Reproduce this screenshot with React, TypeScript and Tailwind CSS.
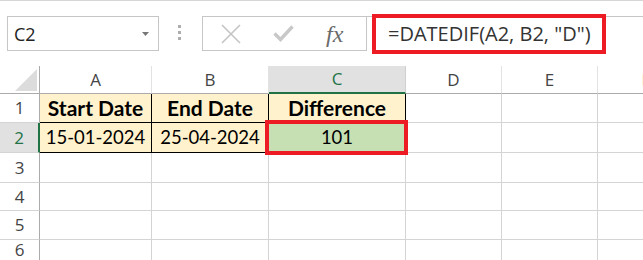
import React from "react";

const cols = ["A", "B", "C", "D", "E", "F"];
const rowHeights = ["h-[29px]", "h-[30px]", "h-[30px]", "h-[28px]", "h-[29px]", "h-[21px]"];
const colWidths = ["w-[112px]", "w-[117px]", "w-[137px]", "w-[96px]", "w-[96px]", "w-[97px]"];

const ui = { fontFamily: '"Open Sans", "Noto Sans", sans-serif' };
const cellFont = { fontFamily: 'Lato, "Liberation Sans", sans-serif' };

function FormulaBar() {
  return (
    <div className="relative flex h-[66px] items-start border-t border-[#d6d6d6] pt-[15px]" style={ui}>
      <div className="ml-[7px] flex h-[35px] w-[152px] shrink-0 items-center justify-between border border-[#c6c6c6] bg-white pl-[6px] pr-[9px]">
        <span className="text-[18px] leading-none text-[#222]">C2</span>
        <svg width="7" height="4" viewBox="0 0 7 4">
          <path d="M0 0h7L3.5 4z" fill="#777" />
        </svg>
      </div>
      <div className="ml-[19px] mt-[9px] flex flex-col gap-[3px]">
        <div className="h-[3px] w-[3px] bg-[#aeaeae]" />
        <div className="h-[3px] w-[3px] bg-[#aeaeae]" />
        <div className="h-[3px] w-[3px] bg-[#aeaeae]" />
      </div>
      <div className="ml-[21px] flex h-[35px] w-[165px] shrink-0 items-center border border-[#c6c6c6] bg-white">
        <svg className="ml-[18px]" width="20" height="20" viewBox="0 0 20 20">
          <path d="M1 1L19 19M19 1L1 19" stroke="#c4c4c4" strokeWidth="1.6" />
        </svg>
        <svg className="ml-[32px]" width="21" height="17" viewBox="0 0 21 17">
          <path d="M1.5 8.5L7.5 14.5L19.5 1.5" stroke="#c8c8c8" strokeWidth="3.4" fill="none" />
        </svg>
        <span
          className="ml-[32px] text-[24px] italic leading-none text-[#6a6a6a]"
          style={{ fontFamily: '"Liberation Serif", "DejaVu Serif", serif' }}
        >
          fx
        </span>
      </div>
      <div className="h-[35px] flex-1 border-t border-[#c6c6c6] bg-white" />
      <div className="absolute left-[372px] top-[13px] flex h-[40px] w-[234px] items-center border-4 border-[#ed1c24] bg-white pl-[12px]">
        <span className="whitespace-nowrap text-[20px] leading-none text-[#333]">=DATEDIF(A2, B2, "D")</span>
      </div>
    </div>
  );
}

function ColumnHeaders() {
  return (
    <div className="flex h-[28px]" style={ui}>
      <div className="flex w-[40px] shrink-0 items-end justify-end border-b border-r border-[#ababab] bg-white pb-[2px] pr-[2px]">
        <svg width="22" height="22" viewBox="0 0 22 22">
          <path d="M22 0V22H0z" fill="#dcdcdc" />
        </svg>
      </div>
      {cols.map((c, i) =>
        c === "C" ? (
          <div
            key={c}
            className={`${colWidths[i]} flex shrink-0 items-center justify-center border-b-2 border-r border-b-[#217346] border-r-[#cfcfcf] bg-[#e1e1e1] text-[17px] text-[#217346]`}
          >
            C
          </div>
        ) : (
          <div
            key={c}
            className={`${colWidths[i]} flex shrink-0 items-center justify-center border-b border-r border-b-[#ababab] border-r-[#e2e2e2] bg-white text-[17px] text-[#444]`}
          >
            {c}
          </div>
        )
      )}
    </div>
  );
}

function Cell({ i, r, children }: { i: number; r: number; children?: React.ReactNode }) {
  const inTable = r < 2 && i < 3;
  let bg = "bg-white";
  if (inTable) bg = r === 1 && i === 2 ? "bg-[#c6e0b4]" : "bg-[#fff2cc]";
  const border = inTable ? "border-black" : "border-[#d4d4d4]";
  const weight = r === 0 ? "font-bold text-[21px]" : "font-normal text-[18.5px]";
  return (
    <div
      className={`${colWidths[i]} ${bg} ${border} ${weight} flex shrink-0 items-center justify-center whitespace-nowrap border-b border-r text-black`}
      style={cellFont}
    >
      {children}
    </div>
  );
}

const data: string[][] = [
  ["Start Date", "End Date", "Difference"],
  ["15-01-2024", "25-04-2024", "101"],
];

export default function App() {
  return (
    <div className="h-[260px] w-[643px] overflow-hidden bg-white">
      <FormulaBar />
      <div className="relative">
        <ColumnHeaders />
        {rowHeights.map((h, r) => (
          <div key={r} className={`flex ${h}`}>
            <div
              className={`flex w-[40px] shrink-0 items-center justify-center border-b text-[17px] ${
                r === 1
                  ? "border-r-2 border-b-[#d4d4d4] border-r-[#217346] bg-[#e1e1e1] text-[#217346]"
                  : "border-r border-b-[#d4d4d4] border-r-[#ababab] bg-white text-[#444]"
              }`}
              style={ui}
            >
              {r + 1}
            </div>
            {cols.map((c, i) => (
              <Cell key={c} i={i} r={r}>
                {data[r]?.[i]}
              </Cell>
            ))}
          </div>
        ))}
        <div className="absolute left-[265px] top-[54px] h-[35px] w-[143px] border-4 border-[#ed1c24]" />
      </div>
    </div>
  );
}
